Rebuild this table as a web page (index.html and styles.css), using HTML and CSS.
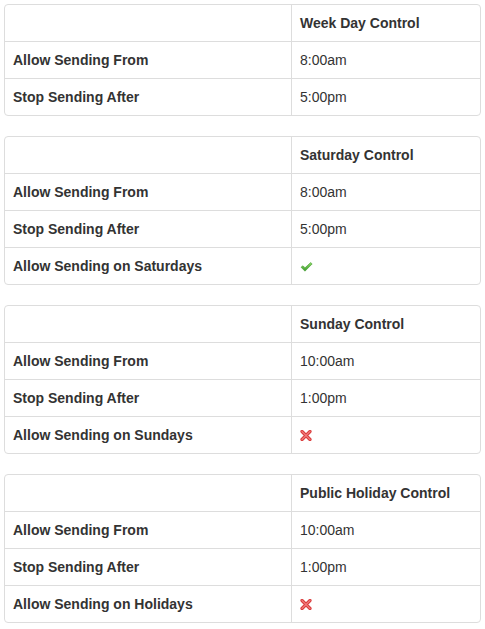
FILE: index.html
```html
<!DOCTYPE html>
<html>
<head>
<meta charset="utf-8">
<link rel="stylesheet" href="styles.css">
</head>
<body>
<div class="panel">
  <table class="tbl">
    <thead><tr><th class="c1"></th><th>Week Day Control</th></tr></thead>
    <tbody>
      <tr><th>Allow Sending From</th><td>8:00am</td></tr>
      <tr><th>Stop Sending After</th><td>5:00pm</td></tr>
    </tbody>
  </table>
</div>
<div class="panel">
  <table class="tbl">
    <thead><tr><th class="c1"></th><th>Saturday Control</th></tr></thead>
    <tbody>
      <tr><th>Allow Sending From</th><td>8:00am</td></tr>
      <tr><th>Stop Sending After</th><td>5:00pm</td></tr>
      <tr><th>Allow Sending on Saturdays</th><td><svg class="ico" width="13" height="10" viewBox="0 0 13 10"><defs><linearGradient id="g" x1="0" y1="0" x2="0" y2="1"><stop offset="0" stop-color="#8ed86a"/><stop offset="1" stop-color="#3a9a2a"/></linearGradient></defs><path d="M1 5.2 L3 3.8 L5 5.8 L10.6 0.6 L12.2 1.9 L5 9.2 Z" fill="url(#g)" stroke="#4a9f36" stroke-width="0.6" stroke-linejoin="round"/></svg></td></tr>
    </tbody>
  </table>
</div>
<div class="panel">
  <table class="tbl">
    <thead><tr><th class="c1"></th><th>Sunday Control</th></tr></thead>
    <tbody>
      <tr><th>Allow Sending From</th><td>10:00am</td></tr>
      <tr><th>Stop Sending After</th><td>1:00pm</td></tr>
      <tr><th>Allow Sending on Sundays</th><td><svg class="ico x" width="12" height="11" viewBox="0 0 12 11"><path d="M2 1.5 L10 9.5 M10 1.5 L2 9.5" stroke="#d93b3b" stroke-width="3.2" stroke-linecap="round"/><path d="M2 1.5 L10 9.5 M10 1.5 L2 9.5" stroke="#f07a7a" stroke-width="1.2" stroke-linecap="round"/></svg></td></tr>
    </tbody>
  </table>
</div>
<div class="panel">
  <table class="tbl">
    <thead><tr><th class="c1"></th><th>Public Holiday Control</th></tr></thead>
    <tbody>
      <tr><th>Allow Sending From</th><td>10:00am</td></tr>
      <tr><th>Stop Sending After</th><td>1:00pm</td></tr>
      <tr><th>Allow Sending on Holidays</th><td><svg class="ico x" width="12" height="11" viewBox="0 0 12 11"><path d="M2 1.5 L10 9.5 M10 1.5 L2 9.5" stroke="#d93b3b" stroke-width="3.2" stroke-linecap="round"/><path d="M2 1.5 L10 9.5 M10 1.5 L2 9.5" stroke="#f07a7a" stroke-width="1.2" stroke-linecap="round"/></svg></td></tr>
    </tbody>
  </table>
</div>
</body>
</html>
```
FILE: styles.css
```css
body {
  margin: 4px;
  font-family: "Liberation Sans", Arial, sans-serif;
  font-size: 14px;
  line-height: 20px;
  color: #333;
  background: #fff;
}
.panel {
  border: 1px solid #ddd;
  border-radius: 4px;
  margin-bottom: 20px;
  overflow: hidden;
  width: 475px;
}
.tbl {
  width: 100%;
  border-collapse: collapse;
  table-layout: fixed;
}
.tbl th, .tbl td {
  padding: 8px;
  text-align: left;
  vertical-align: top;
  border-top: 1px solid #ddd;
  border-left: 1px solid #ddd;
  height: 20px;
}
.tbl thead tr:first-child th { border-top: 0; }
.tbl tr > :first-child { border-left: 0; }
.tbl th { font-weight: bold; }
.tbl td { font-weight: normal; }
.c1 { width: 270px; }
.ico { display: block; margin-top: 6px; }
.ico.x { margin-top: 5px; }
```
